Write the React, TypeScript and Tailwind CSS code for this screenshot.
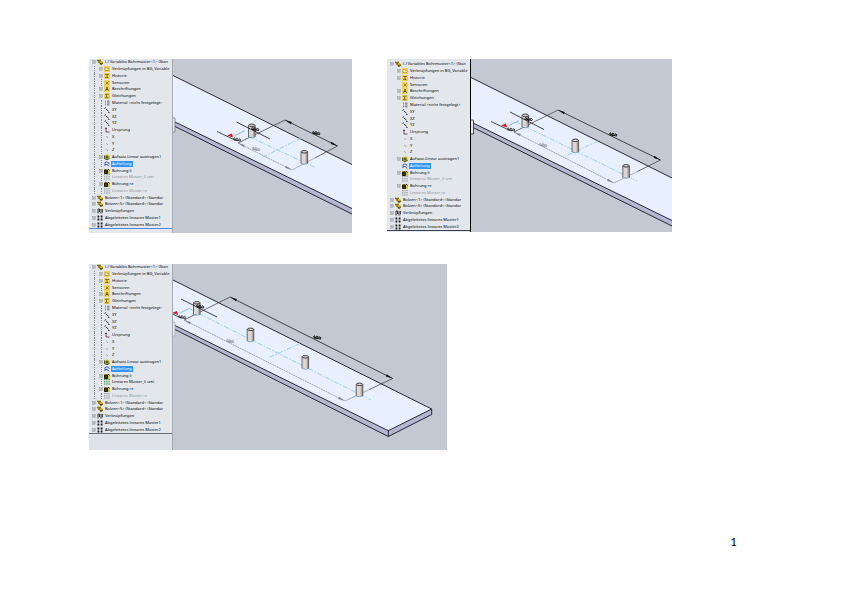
import React from 'react';

type IconKind =
  | 'assembly' | 'folder' | 'history' | 'sensor' | 'notes' | 'sigma' | 'material' | 'plane'
  | 'origin' | 'axis' | 'extrude' | 'sketch' | 'hole' | 'patternOff' | 'patternOn' | 'mates' | 'pattern';

type Row = { icon: IconKind; label: string; root?: boolean; expand?: boolean; off?: boolean; selected?: boolean };
type Point = [number, number];
type Segment = [number, number, number, number];

const baseRows: Row[] = [
  { icon: 'assembly', label: '(-) Variables Bohrmuster<1> (Stan', root: true, expand: true },
  { icon: 'folder', label: 'Verknüpfungen in BG_Variable', expand: true },
  { icon: 'history', label: 'Historie', expand: true },
  { icon: 'sensor', label: 'Sensoren' },
  { icon: 'notes', label: 'Beschriftungen', expand: true },
  { icon: 'sigma', label: 'Gleichungen', expand: true },
  { icon: 'material', label: 'Material <nicht festgelegt>' },
  { icon: 'plane', label: 'XY' },
  { icon: 'plane', label: 'XZ' },
  { icon: 'plane', label: 'YZ' },
  { icon: 'origin', label: 'Ursprung' },
  { icon: 'axis', label: 'X' },
  { icon: 'axis', label: 'Y' },
  { icon: 'axis', label: 'Z' },
  { icon: 'extrude', label: 'Aufsatz-Linear austragen1', expand: true },
  { icon: 'sketch', label: 'Aufteilung', selected: true },
  { icon: 'hole', label: 'Bohrung li', expand: true },
  { icon: 'patternOff', label: 'Lineares Muster_li umi', off: true },
  { icon: 'hole', label: 'Bohrung re', expand: true },
  { icon: 'patternOff', label: 'Lineares Muster re', off: true },
  { icon: 'assembly', label: 'Bolzen<1> (Standard<<Standar', root: true, expand: true },
  { icon: 'assembly', label: 'Bolzen<5> (Standard<<Standar', root: true, expand: true },
  { icon: 'mates', label: 'Verknüpfungen', root: true, expand: true },
  { icon: 'pattern', label: 'Abgeleitetes lineares Muster1', root: true, expand: true },
  { icon: 'pattern', label: 'Abgeleitetes lineares Muster2', root: true, expand: true },
];

const activeRows: Row[] = baseRows.map((row, i) => (i === 17 ? { ...row, icon: 'patternOn', off: false } : row));

function Dots({ color }: { color: string }) {
  return (
    <g fill={color}>
      {[0, 2.2, 4.4].map((y) => [0, 2.2, 4.4].map((x) => <rect key={`${x}-${y}`} x={x} y={y} width="1.4" height="1.2" />))}
    </g>
  );
}

function TreeIcon({ kind }: { kind: IconKind }) {
  const yellow = ['folder', 'history', 'sensor', 'notes', 'sigma'].includes(kind);
  return (
    <svg viewBox="0 0 6 6" className="size-1.5 shrink-0" aria-hidden="true">
      {yellow && <rect width="6" height="6" fill="#f2d45a" />}
      {kind === 'assembly' && (
        <>
          <path d="M0 1 2 0l2 1v2L2 4 0 3z" fill="#e8c828" />
          <path d="M2 3l2-1 2 1v2L4 6 2 5z" fill="#c8a820" />
          <path d="M0 1l2 1 2-1M2 2v2M3 4l1 1 2-1M4 5v1" stroke="#222" strokeWidth=".7" fill="none" />
        </>
      )}
      {kind === 'folder' && <path d="M1 4.5V1.5h1.5l.5.7h2v2.3z" fill="#fff4b0" stroke="#8a6a10" strokeWidth=".5" />}
      {kind === 'history' && <path d="M1 1.5h4M1 4.5h3M3 1.5V4l1.5.8" stroke="#403818" strokeWidth=".6" fill="none" />}
      {kind === 'sensor' && <path d="M1.5 4.5 4.5 1.5M2 1.5l2.5 3" stroke="#7a6010" strokeWidth=".8" />}
      {kind === 'notes' && <path d="M1.5 5 3 1l1.5 4M2 3.5h2" stroke="#302810" strokeWidth=".6" fill="none" />}
      {kind === 'sigma' && <path d="M4.6 1.2H1.5L3 3 1.5 4.8h3.1" stroke="#302810" strokeWidth=".6" fill="none" />}
      {kind === 'material' && <path d="M1 1.2h1M3 1.2h2.5M1 3h1M3 3h2.5M1 4.8h1M3 4.8h2.5" stroke="#54605c" strokeWidth=".9" />}
      {kind === 'plane' && <path d="M.5 1.5 2 .5M2 2.2 4.5 4M4 5.2l1.5.3" stroke="#222" strokeWidth=".9" />}
      {kind === 'origin' && <path d="M2 .5v4.5h3.5M1 1.5h2" stroke="#5a2a30" strokeWidth=".8" fill="none" />}
      {kind === 'axis' && <path d="M2.5 2.5l1.2 1" stroke="#555" strokeWidth=".7" />}
      {kind === 'extrude' && (
        <>
          <path d="M0 1.5 3 0l3 1.5v3L3 6 0 4.5z" fill="#e0d048" />
          <path d="M.4 1.5V4.5L3 5.6 5.6 4.4M2 2.2h2v1.6H2z" stroke="#2a3a18" strokeWidth=".9" fill="none" />
        </>
      )}
      {kind === 'sketch' && <path d="M1 5V1.5C3 .2 5.5 1.5 5 3M1 3.5h2.5L5 5.5" stroke="#2a50d0" strokeWidth=".9" fill="none" />}
      {kind === 'hole' && (
        <>
          <rect y="1" width="6" height="5" fill="#d8c440" />
          <path d="M.5 2h3v3.5h-3zM4 1l1.5 1.5" stroke="#151505" strokeWidth=".9" fill="#3a3a18" />
        </>
      )}
      {kind === 'patternOff' && <Dots color="#9a9ea4" />}
      {kind === 'patternOn' && <Dots color="#3f9a48" />}
      {kind === 'mates' && <path d="M1 5.5V1h1.5v3M4 1v4.5M5.4 1v3.5" stroke="#222" strokeWidth=".9" fill="none" />}
      {kind === 'pattern' && <path d="M.5.5h1.8v2H.5zM3.7.5h1.8v2H3.7zM.5 3.6h1.8v2H.5zM3.7 3.6h1.8v2H3.7z" fill="#1c1c1c" />}
    </svg>
  );
}

function Expander() {
  return (
    <svg viewBox="0 0 4 4" className="size-1" aria-hidden="true">
      <rect x=".4" y=".4" width="3.2" height="3.2" fill="#eef0f3" stroke="#8b9097" strokeWidth=".5" />
      <path d="M1 2h2" stroke="#333" strokeWidth=".6" />
    </svg>
  );
}

function Guide() {
  return <span className="w-px self-stretch border-l border-dotted border-[#8a909a]" />;
}

function Tree({ rows, guides, className }: { rows: Row[]; guides?: boolean; className: string }) {
  return (
    <ul className={`flex flex-col pl-[3px] ${className}`}>
      {rows.map((row, i) => (
        <li key={i} className="flex min-h-0 flex-1 items-center whitespace-nowrap">
          {!row.root && <span className="flex w-[7px] shrink-0 self-stretch pl-0.5">{guides && <Guide />}</span>}
          <span className="mr-px flex w-1 shrink-0 items-center justify-center self-stretch">
            {row.expand ? <Expander /> : guides && <Guide />}
          </span>
          <TreeIcon kind={row.icon} />
          <span
            className={`ml-px px-px leading-[6px] ${
              row.selected ? 'bg-[#3294f4] text-white' : row.off ? 'text-[#8d9197]' : 'text-black'
            }`}
          >
            {row.label}
          </span>
        </li>
      ))}
    </ul>
  );
}

function Pin({ x, y }: { x: number; y: number }) {
  return (
    <g>
      <rect x={x} y={y + 1} width="6.6" height="12" fill="#dcd7d2" />
      <rect x={x + 4.6} y={y + 1} width="2" height="12" fill="#a8a3a0" />
      <path d={`M${x} ${y + 13}V${y + 1.5}M${x + 6.6} ${y + 13}V${y + 1.5}`} stroke="#333" strokeWidth=".7" />
      <ellipse cx={x + 3.3} cy={y + 1.3} rx="3.2" ry="1.2" fill="#e4e0dd" stroke="#111" strokeWidth=".8" />
      <path d={`M${x} ${y + 13}q3.3 1.6 6.6 0`} stroke="#5a88b0" strokeWidth=".7" fill="none" />
    </g>
  );
}

function Line({ s, color, dash, width = 0.8 }: { s: Segment; color: string; dash?: string; width?: number }) {
  return <line x1={s[0]} y1={s[1]} x2={s[2]} y2={s[3]} stroke={color} strokeWidth={width} strokeDasharray={dash} />;
}

function Arrow({ at, flip, color }: { at: Point; flip?: boolean; color: string }) {
  return (
    <path d="M0 0l6.8 2L6 4.2z" fill={color} transform={`translate(${at[0]} ${at[1]})${flip ? ' rotate(180)' : ''}`} />
  );
}

// A cluster of strokes for a dimension figure lying in the plane of the plate.
function Mark({ at, color }: { at: Point; color: string }) {
  return (
    <path
      transform={`translate(${at[0]} ${at[1]})`}
      d="M-4-.5l1.6-1.2.8 2-1.6.4M-1.2.8l.8-2.2 1.6.8-.8 2zM1.6 1.4l.8-2.2 1.6 1.2-.8 1.3M-3.4 0l7 1.6"
      stroke={color}
      strokeWidth=".8"
      fill="none"
    />
  );
}

type Scene = {
  viewBox: string;
  top: string;
  side: string;
  edges: Segment[];
  pins: Point[];
  dim: Segment;
  dimMark: Point;
  grayDim: Segment;
  grayMark: Point;
  center: Segment;
  cross: Segment;
  pinDim: Segment;
  red: Point;
  tab: Point;
  tabColor: string;
};

function Viewport({ scene, label, className }: { scene: Scene; label: string; className: string }) {
  const { dim, grayDim, pinDim, red, tab, pins } = scene;
  return (
    <svg viewBox={scene.viewBox} className={`block min-w-0 flex-1 ${className}`} role="img" aria-label={label}>
      <polygon points={scene.side} fill="#b4b7d2" />
      <polygon points={scene.top} fill="#e8f0ff" />
      {scene.edges.map((s, i) => <Line key={i} s={s} color="#15151f" width={0.9} />)}
      <Line s={scene.center} color="#8fc4e8" dash="5 1.5 1.5 1.5" />
      <Line s={scene.cross} color="#8fc4e8" dash="5 1.5 1.5 1.5" />
      <Line s={grayDim} color="#8d929c" dash="2 .6" />
      <Arrow at={[grayDim[0], grayDim[1]]} color="#80848c" />
      <Arrow at={[grayDim[2], grayDim[3]]} flip color="#80848c" />
      <Mark at={scene.grayMark} color="#8d929c" />
      <Line s={dim} color="#222" />
      <Line s={[dim[0], dim[1], grayDim[0], grayDim[1]]} color="#333" width={0.7} />
      <Line s={[dim[2], dim[3], (dim[2] + grayDim[2]) / 2, (dim[3] + grayDim[3]) / 2]} color="#333" width={0.7} />
      <Line s={[(dim[2] + grayDim[2]) / 2, (dim[3] + grayDim[3]) / 2, grayDim[2], grayDim[3]]} color="#8d929c" width={0.7} />
      <Arrow at={[dim[0], dim[1]]} color="#111" />
      <Arrow at={[dim[2], dim[3]]} flip color="#111" />
      <Mark at={scene.dimMark} color="#000" />
      {pins.map(([x, y]) => <Pin key={x} x={x} y={y} />)}
      <Line s={pinDim} color="#111" />
      <Mark at={[pins[0][0] + 6.5, pins[0][1] + 5]} color="#111" />
      <Line s={[red[0] + 5, red[1] - 1, red[0] + 15, red[1] - 6]} color="#6ea8e8" />
      <Line s={[red[0] - 13, red[1] - 5, red[0] + 6, red[1] + 4]} color="#222" />
      <path d={`M${red[0] - 3} ${red[1] - 1}l5-2 1 4z`} fill="#e01828" />
      <Mark at={[red[0] + 7, red[1] + 3]} color="#333" />
      <path d={`M${tab[0]} ${tab[1]}h3v14h-3`} fill="#e3e7ec" stroke={scene.tabColor} strokeWidth=".7" />
    </svg>
  );
}

const shortScene: Scene = {
  viewBox: '173 59 179 174',
  top: '172,75 352,164.5 352,208.5 172,120.5',
  side: '172,120 352,208 352,214 172,125',
  edges: [[172, 75, 352, 164.5], [172, 120.5, 352, 208.5], [172, 125, 352, 214]],
  pins: [[248.5, 124], [301, 150.5]],
  dim: [285, 120, 337.5, 146],
  dimMark: [316, 133],
  grayDim: [238, 143, 292, 170],
  grayMark: [256, 149],
  center: [250, 137, 316, 168],
  cross: [301, 138, 261, 158],
  pinDim: [236.5, 122, 270, 139],
  red: [230, 136.5],
  tab: [172, 118],
  tabColor: '#70757f',
};

const middleScene: Scene = {
  viewBox: '471 59 201 173',
  top: '470,77 672,178 672,220.5 470,121.5',
  side: '470,121 672,220 672,226 470,126',
  edges: [[470, 77, 672, 178], [470, 121.5, 672, 220.5], [470, 126, 672, 226]],
  pins: [[522, 114], [572, 139], [622.8, 164.5]],
  dim: [558, 110, 660.5, 160],
  dimMark: [613, 134.5],
  grayDim: [514, 132, 614, 183],
  grayMark: [543, 145],
  center: [516, 122, 637, 181],
  cross: [598, 141, 566, 156],
  pinDim: [510, 112, 544, 129.5],
  red: [504, 126.5],
  tab: [470.5, 120],
  tabColor: '#15151f',
};

const longScene: Scene = {
  viewBox: '173 264 274 186',
  top: '172,279.5 431.7,409 388.3,430.7 172,324',
  side: '172,323 388.3,430.7 431.7,409 431.7,414.5 388.3,436.5 172,328',
  edges: [
    [172, 279.5, 431.7, 409], [172, 324, 388.3, 430.7], [172, 328, 388.3, 436.5],
    [388.3, 430.7, 431.7, 409], [388.3, 436.5, 431.7, 414.5], [388.3, 430.7, 388.3, 436.5], [431.7, 409, 431.7, 414.5],
  ],
  pins: [[193.5, 301.5], [247.2, 328], [302, 355.5], [356.2, 383]],
  dim: [230, 297, 392.7, 378.5],
  dimMark: [317, 337.5],
  grayDim: [184, 320, 345, 401],
  grayMark: [230, 341],
  center: [190, 309, 371, 400],
  cross: [300, 343.5, 268, 358],
  pinDim: [181, 299, 217, 317],
  red: [175, 314],
  tab: [172, 322],
  tabColor: '#a4a9b3',
};

export default function App() {
  return (
    <main className="w-full bg-white">
      <div className="flex flex-wrap gap-x-[35px] gap-y-[31px] pt-[59px] pl-[89px] font-['Noto_Sans',sans-serif] text-[4px]">
        <figure className="flex w-[263px] overflow-hidden bg-[#c4c8d2]">
          <div className="w-[84px] shrink-0 border-r border-[#a4a9b3] bg-[#e3e7ec]">
            <Tree rows={baseRows} guides className="h-[170px] border-b border-[#4e8bd8]" />
          </div>
          <Viewport scene={shortScene} label="Platte mit zwei Bolzen" className="h-[174px]" />
        </figure>
        <figure className="flex w-[285px] self-start overflow-hidden bg-[#c4c8d2]">
          <div className="w-[84px] shrink-0 border-r border-black bg-[#e3e7ec] pt-0.5">
            <Tree rows={baseRows} className="h-[170px] border-b border-[#3b4252]" />
          </div>
          <Viewport scene={middleScene} label="Platte mit drei Bolzen" className="h-[173px]" />
        </figure>
        <figure className="flex w-[358px] overflow-hidden bg-[#c4c8d2]">
          <div className="w-[84px] shrink-0 border-r border-[#a4a9b3] bg-[#dfe2e8]">
            <Tree rows={activeRows} guides className="h-[170px] border-b border-[#6b717c] bg-[#e3e7ec]" />
          </div>
          <Viewport scene={longScene} label="Platte mit vier Bolzen" className="h-[186px]" />
        </figure>
      </div>
      <p className="pt-[84px] pr-[105px] pb-11 text-right font-['Lato',sans-serif] text-[11px] leading-4 text-black">1</p>
    </main>
  );
}
